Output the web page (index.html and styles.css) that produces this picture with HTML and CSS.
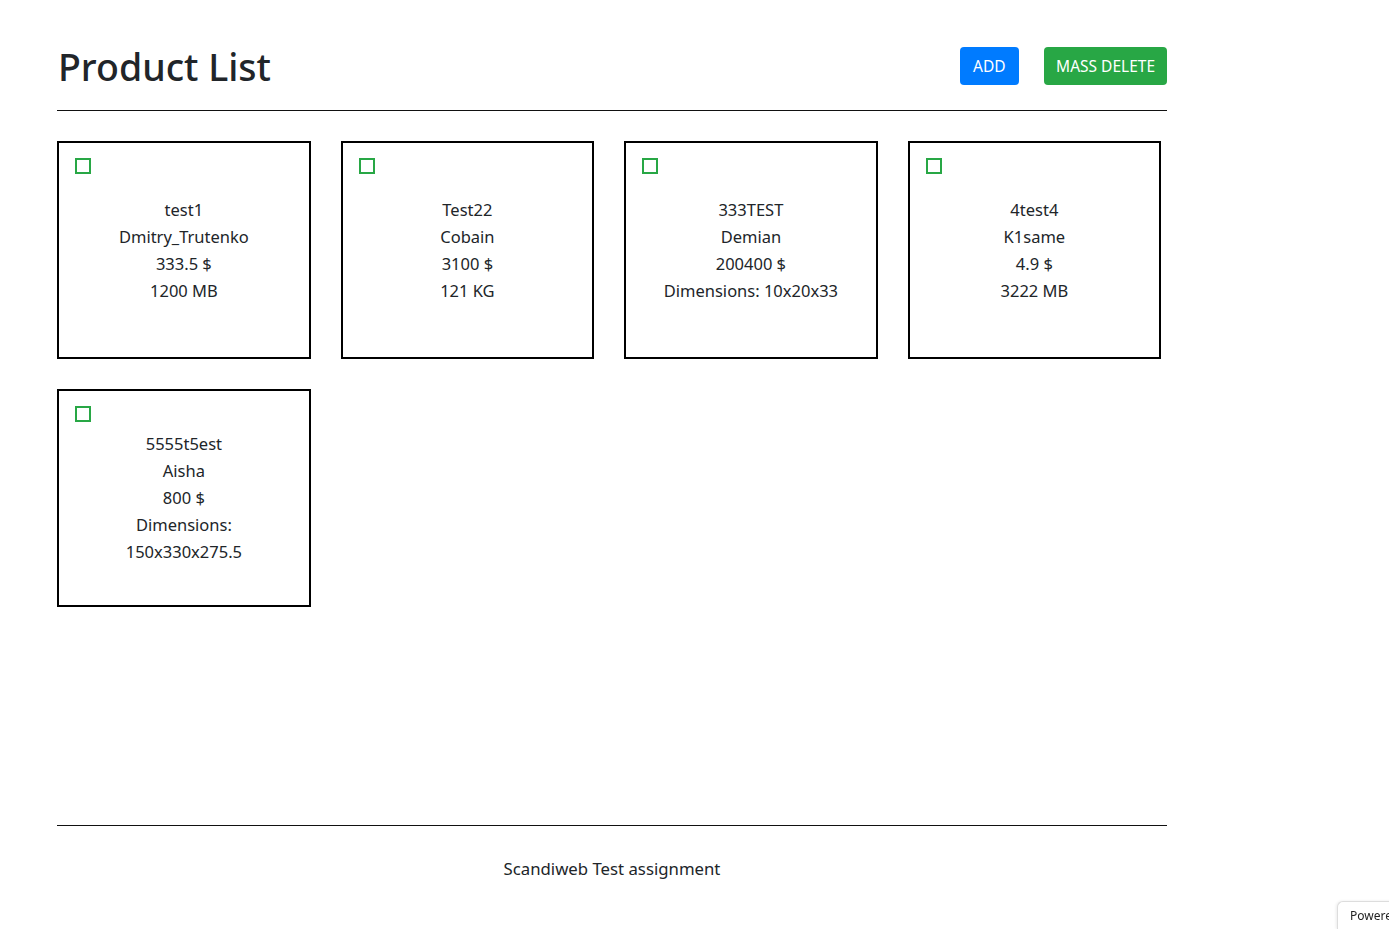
FILE: index.html
```html
<!DOCTYPE html>
<html lang="en">
<head>
<meta charset="utf-8">
<title>Product List</title>
<link rel="stylesheet" href="styles.css">
</head>
<body>
<div class="container">
  <header class="page-header">
    <h1 class="title">Product List</h1>
    <div class="actions">
      <button class="btn btn-blue">ADD</button>
      <button class="btn btn-green">MASS DELETE</button>
    </div>
  </header>

  <main class="products">
    <div class="card">
      <input type="checkbox" class="delete-checkbox">
      <div class="info">
        <div>test1</div>
        <div>Dmitry_Trutenko</div>
        <div>333.5 $</div>
        <div>1200 MB</div>
      </div>
    </div>
    <div class="card">
      <input type="checkbox" class="delete-checkbox">
      <div class="info">
        <div>Test22</div>
        <div>Cobain</div>
        <div>3100 $</div>
        <div>121 KG</div>
      </div>
    </div>
    <div class="card">
      <input type="checkbox" class="delete-checkbox">
      <div class="info">
        <div>333TEST</div>
        <div>Demian</div>
        <div>200400 $</div>
        <div>Dimensions: 10x20x33</div>
      </div>
    </div>
    <div class="card">
      <input type="checkbox" class="delete-checkbox">
      <div class="info">
        <div>4test4</div>
        <div>K1same</div>
        <div>4.9 $</div>
        <div>3222 MB</div>
      </div>
    </div>
    <div class="card">
      <input type="checkbox" class="delete-checkbox">
      <div class="info narrow">
        <div>5555t5est</div>
        <div>Aisha</div>
        <div>800 $</div>
        <div>Dimensions: 150x330x275.5</div>
      </div>
    </div>
  </main>

  <footer class="page-footer">Scandiweb Test assignment</footer>
</div>
<div class="powered">Powered by</div>
</body>
</html>
```

FILE: styles.css
```css
html, body {
  margin: 0;
  padding: 0;
  background: #fff;
}
body {
  font-family: "Noto Sans", "Open Sans", sans-serif;
  color: #212529;
  font-size: 16.5px;
  line-height: 27px;
}
.container {
  width: 1110px;
  margin-left: 57px;
}
.page-header {
  display: flex;
  align-items: center;
  justify-content: space-between;
  padding: 43px 0 19px;
  border-bottom: 1px solid #111;
}
.title {
  margin: 0 0 0 1px;
  font-size: 37.5px;
  line-height: 48px;
  font-weight: 500;
  color: #212529;
}
.actions {
  display: flex;
  gap: 25px;
  margin-top: -3px;
}
.btn {
  font-family: inherit;
  font-size: 15.5px;
  line-height: 24px;
  padding: 7px 12px;
  border: 0;
  border-radius: 4px;
  color: #fff;
  cursor: pointer;
}
.btn-blue { background: #007bff; padding: 7px 13.5px; }
.btn-green { background: #28a745; padding: 7px 12px; }

.products {
  display: grid;
  grid-template-columns: repeat(4, 253.75px);
  column-gap: 29.75px;
  row-gap: 30px;
  margin-top: 30px;
  margin-bottom: 218px;
}
.card {
  position: relative;
  box-sizing: border-box;
  height: 218px;
  border: 2px solid #000;
  display: flex;
  align-items: center;
  justify-content: center;
  text-align: center;
}
.delete-checkbox {
  position: absolute;
  left: 16px;
  top: 15px;
  width: 16px;
  height: 16px;
  margin: 0;
  appearance: none;
  -webkit-appearance: none;
  border: 2px solid #28a745;
  background: #fff;
  box-sizing: border-box;
}
.info {
  padding: 0 10px 1px;
}
.info.narrow {
  padding: 0 50px 1px;
}
.page-footer {
  border-top: 1px solid #111;
  padding-top: 29px;
  text-align: center;
  font-size: 16.75px;
}
.powered {
  position: fixed;
  right: -40px;
  bottom: 0;
  width: 92px;
  height: 28px;
  box-sizing: border-box;
  padding: 6px 0 0 12px;
  font-size: 12px;
  line-height: 16px;
  color: #222;
  background: #fff;
  border: 1px solid #ddd;
  border-right: 0;
  border-bottom: 0;
  border-radius: 6px 0 0 0;
  box-shadow: -1px 0 3px rgba(0,0,0,0.08);
}
```
